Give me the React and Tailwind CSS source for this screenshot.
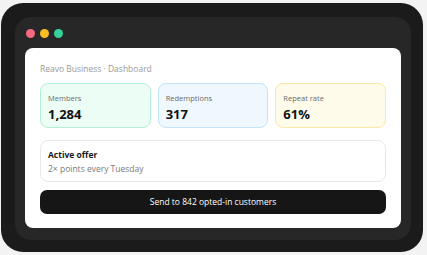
import React from 'react';

const stats = [
  { label: 'Members', value: '1,284', cls: 'bg-[#ecfdf5] border-[#b4f0d4]' },
  { label: 'Redemptions', value: '317', cls: 'bg-[#eff8ff] border-[#c3e3fb]' },
  { label: 'Repeat rate', value: '61%', cls: 'bg-[#fffbea] border-[#fbe7a6]' },
];

function App() {
  return (
    <div className="w-[427px] h-[255px] bg-[#f3f3f3] pt-[3px] pl-[1px] font-['Open_Sans','Noto_Sans',sans-serif]">
      <div className="w-[422px] h-[249px] rounded-[22px] bg-[#1b1b1b] p-[14px]">
        <div className="w-[396px] h-[223px] rounded-[16px] bg-[#272727] px-[10px] pt-[12px]">
          <div className="flex items-center gap-[5px] pl-[1px]">
            <span className="w-[9px] h-[9px] rounded-full bg-[#f7697f]" />
            <span className="w-[9px] h-[9px] rounded-full bg-[#fbbf24]" />
            <span className="w-[9px] h-[9px] rounded-full bg-[#34d399]" />
          </div>
          <div className="mt-[10px] h-[180px] rounded-[8px] bg-white px-[15px] pt-[14px]">
            <div className="text-[8.5px] leading-[14px] text-[#9a9a9a]">Reavo Business · Dashboard</div>
            <div className="mt-[7px] grid grid-cols-3 gap-[7px]">
              {stats.map((s) => (
                <div key={s.label} className={`h-[45px] rounded-[8px] border px-[7px] pt-[8px] ${s.cls}`}>
                  <div className="text-[7.5px] leading-[12px] text-[#6b6b6b]">{s.label}</div>
                  <div className="mt-[1px] text-[13px] leading-[18px] font-bold text-[#111]">{s.value}</div>
                </div>
              ))}
            </div>
            <div className="mt-[12px] h-[42px] rounded-[8px] border border-[#e8e8e8] px-[7px] pt-[7px]">
              <div className="text-[8.5px] leading-[14px] font-bold text-[#1a1a1a]">Active offer</div>
              <div className="text-[8.5px] leading-[14px] text-[#7a7a7a]">2× points every Tuesday</div>
            </div>
            <button className="mt-[8px] w-full h-[24px] rounded-[7px] bg-[#161616] text-white text-[8.5px] leading-[14px]">
              Send to 842 opted-in customers
            </button>
          </div>
        </div>
      </div>
    </div>
  );
}

export default App;
